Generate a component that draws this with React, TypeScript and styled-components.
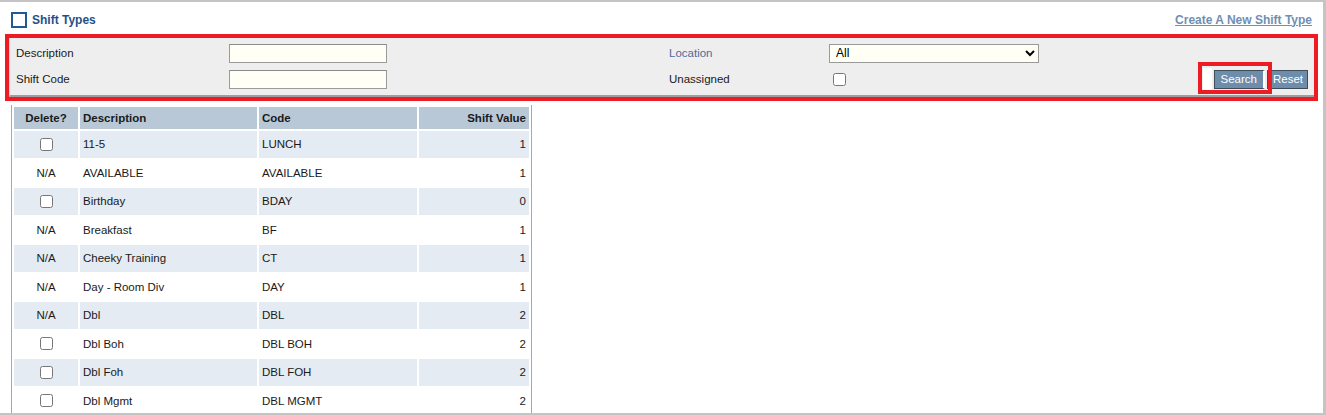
import styled, { createGlobalStyle } from 'styled-components';

const GlobalStyle = createGlobalStyle`
    html, body {
        margin: 0;
        padding: 0;
        background: #ffffff;
    }
    body {
        font-family: "Liberation Sans", Arial, sans-serif;
        font-size: 11.5px;
        color: #1a1a1a;
    }
`;

type Row = { del: boolean; desc: string; code: string; value: number };

const rows: Row[] = [
    { del: true, desc: '11-5', code: 'LUNCH', value: 1 },
    { del: false, desc: 'AVAILABLE', code: 'AVAILABLE', value: 1 },
    { del: true, desc: 'Birthday', code: 'BDAY', value: 0 },
    { del: false, desc: 'Breakfast', code: 'BF', value: 1 },
    { del: false, desc: 'Cheeky Training', code: 'CT', value: 1 },
    { del: false, desc: 'Day - Room Div', code: 'DAY', value: 1 },
    { del: false, desc: 'Dbl', code: 'DBL', value: 2 },
    { del: true, desc: 'Dbl Boh', code: 'DBL BOH', value: 2 },
    { del: true, desc: 'Dbl Foh', code: 'DBL FOH', value: 2 },
    { del: true, desc: 'Dbl Mgmt', code: 'DBL MGMT', value: 2 },
];

const App = () => {
    return (
        <>
            <GlobalStyle />
            <Frame>
                <TitleBar>
                    <TitleGroup>
                        <TitleIcon />
                        <Title>Shift Types</Title>
                    </TitleGroup>
                    <CreateLink href="#">Create A New Shift Type</CreateLink>
                </TitleBar>

                <Highlight>
                    <FilterPanel>
                        <Label>Description</Label>
                        <TextInput type="text" />
                        <Label $accent>Location</Label>
                        <Select defaultValue="All">
                            <option>All</option>
                        </Select>
                        <span />

                        <Label>Shift Code</Label>
                        <TextInput type="text" />
                        <Label>Unassigned</Label>
                        <CheckCell>
                            <Check type="checkbox" />
                        </CheckCell>
                        <ButtonGroup>
                            <ButtonMark />
                            <ActionButton $divider>Search</ActionButton>
                            <ActionButton>Reset</ActionButton>
                            <ButtonHighlight />
                        </ButtonGroup>
                    </FilterPanel>
                </Highlight>

                <Grid>
                    <colgroup>
                        <col style={{ width: 64 }} />
                        <col style={{ width: 177 }} />
                        <col style={{ width: 158 }} />
                        <col style={{ width: 110 }} />
                    </colgroup>
                    <thead>
                        <tr>
                            <HeadCell $align="center">Delete?</HeadCell>
                            <HeadCell>Description</HeadCell>
                            <HeadCell>Code</HeadCell>
                            <HeadCell $align="right">Shift Value</HeadCell>
                        </tr>
                    </thead>
                    <tbody>
                        {rows.map((r, i) => (
                            <BodyRow key={r.desc} $alt={i % 2 === 0}>
                                <Cell $align="center">
                                    {r.del ? <Check type="checkbox" /> : 'N/A'}
                                </Cell>
                                <Cell>{r.desc}</Cell>
                                <Cell>{r.code}</Cell>
                                <Cell $align="right">{r.value}</Cell>
                            </BodyRow>
                        ))}
                    </tbody>
                </Grid>
            </Frame>
        </>
    );
};

const Frame = styled.div`
    width: 1326px;
    height: 415px;
    box-sizing: border-box;
    border-top: 2px solid #c4c4c4;
    border-right: 3px solid #c4c4c4;
    border-bottom: 2px solid #c4c4c4;
    overflow: hidden;
    background: #ffffff;
`;

const TitleBar = styled.div`
    display: flex;
    align-items: center;
    justify-content: space-between;
    height: 32px;
    padding: 3px 11px 0 11px;
    box-sizing: border-box;
`;

const TitleGroup = styled.div`
    display: flex;
    align-items: center;
    gap: 5px;
`;

const TitleIcon = styled.span`
    display: block;
    width: 12px;
    height: 12px;
    border: 2px solid #1f5a96;
`;

const Title = styled.span`
    font-weight: bold;
    font-size: 12px;
    color: #1f5189;
`;

const CreateLink = styled.a`
    font-weight: bold;
    font-size: 12px;
    color: #6f8fb3;
    text-decoration: underline;
`;

const Highlight = styled.div`
    margin: 0 5px 0 5px;
    border: 4px solid #ed1c24;
`;

const FilterPanel = styled.div`
    display: grid;
    grid-template-columns: 213px 440px 160px 1fr auto;
    grid-template-rows: 26px 26px;
    align-items: center;
    padding: 2px 6px 3px 6px;
    background: #eeeeee;
    border-left: 1px solid #d4d4d4;
    border-bottom: 2px solid #9e9e9e;
`;

const Label = styled.span<{ $accent?: boolean }>`
    color: ${(p) => (p.$accent ? '#4f6a9c' : '#1a1a1a')};
    font-size: 11.5px;
`;

const TextInput = styled.input`
    width: 158px;
    height: 19px;
    box-sizing: border-box;
    margin: 0;
    background: #fffff6;
    border: 1px solid #9a9a9a;
    border-top-color: #8a8a8a;
    font-family: inherit;
    font-size: 12px;
`;

const Select = styled.select`
    width: 210px;
    height: 19px;
    box-sizing: border-box;
    margin: 0;
    padding: 0 2px;
    background: #fffff6;
    border: 1px solid #9a9a9a;
    border-radius: 0;
    font-family: inherit;
    font-size: 12px;
    color: #000;
`;

const CheckCell = styled.div`
    padding-left: 4px;
    display: flex;
    align-items: center;
`;

const Check = styled.input`
    width: 13px;
    height: 13px;
    margin: 0;
    vertical-align: middle;
`;

const ButtonGroup = styled.div`
    position: relative;
    display: flex;
    align-items: center;
    gap: 2px;
`;

const ButtonMark = styled.span`
    display: block;
    width: 9px;
    height: 22px;
    background: #ffffff;
`;

const ActionButton = styled.button<{ $divider?: boolean }>`
    height: 19px;
    padding: 0 ${(p) => (p.$divider ? '6px' : '4px')} 0 ${(p) => (p.$divider ? '6px' : '5px')};
    margin: 0;
    background: #6d8dab;
    color: #ffffff;
    font-family: inherit;
    font-size: 11.5px;
    border: 1px solid #3e4d5a;
    border-right: ${(p) => (p.$divider ? '2px solid #ffffff' : '1px solid #3e4d5a')};
    border-radius: 0;
    cursor: pointer;
`;

const ButtonHighlight = styled.span`
    position: absolute;
    left: -5px;
    top: -6px;
    width: 66px;
    height: 24px;
    border: 4px solid #ed1c24;
    pointer-events: none;
`;

const Grid = styled.table`
    margin: 4px 0 0 11px;
    border-collapse: separate;
    border-spacing: 2px;
    border-left: 1px solid #a8a8a8;
    border-right: 1px solid #a8a8a8;
    table-layout: fixed;
    width: 521px;
    font-size: 11.5px;
`;

const HeadCell = styled.th<{ $align?: string }>`
    height: 22px;
    padding: 0 3px;
    background: #b8c8d7;
    font-weight: bold;
    color: #1a1a1a;
    text-align: ${(p) => p.$align ?? 'left'};
`;

const BodyRow = styled.tr<{ $alt: boolean }>`
    background: ${(p) => (p.$alt ? '#e4ebf2' : '#ffffff')};
`;

const Cell = styled.td<{ $align?: string }>`
    height: 26.5px;
    padding: 0 3px;
    text-align: ${(p) => p.$align ?? 'left'};
    color: #1a1a1a;
`;

export default App;
